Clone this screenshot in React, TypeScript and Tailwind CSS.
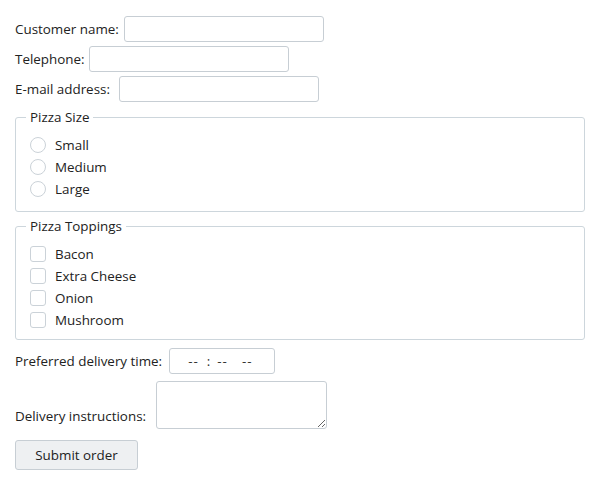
import React from 'react';

const inputCls = 'h-[26px] w-[200px] rounded-[3px] border border-[#c7ced4] bg-white';

const App: React.FC = () => {
  return (
    <div className="min-h-[480px] bg-white px-[15px] pt-[16px] text-[13.4px] text-[#222] font-['Open_Sans',sans-serif]">
      <form className="flex flex-col" onSubmit={(e) => e.preventDefault()}>
        {/* Customer details */}
        <div className="flex flex-col gap-[4px]">
          <label className="flex items-center gap-[5px]">
            Customer name:
            <input type="text" className={inputCls} />
          </label>
          <label className="flex items-center gap-[4px]">
            Telephone:
            <input type="tel" className={inputCls} />
          </label>
          <label className="flex items-center gap-[9px]">
            E-mail address:
            <input type="email" className={inputCls} />
          </label>
        </div>

        {/* Pizza size */}
        <fieldset className="mt-[5px] rounded-[3px] border border-[#cdd6dc] px-[14px] pb-[11px] pt-[7px]">
          <legend className="px-[4px] -ml-[4px]">Pizza Size</legend>
          <div className="flex flex-col">
            {['Small', 'Medium', 'Large'].map((s) => (
              <label key={s} className="flex h-[22px] items-center gap-[9px]">
                <span className="h-[16px] w-[16px] rounded-full border border-[#cbd2d8] bg-white" />
                {s}
              </label>
            ))}
          </div>
        </fieldset>

        {/* Toppings */}
        <fieldset className="mt-[4px] rounded-[3px] border border-[#cdd6dc] px-[14px] pb-[8px] pt-[7px]">
          <legend className="px-[4px] -ml-[4px]">Pizza Toppings</legend>
          <div className="flex flex-col">
            {['Bacon', 'Extra Cheese', 'Onion', 'Mushroom'].map((t) => (
              <label key={t} className="flex h-[22px] items-center gap-[9px]">
                <span className="h-[16px] w-[16px] rounded-[3px] border border-[#cbd2d8] bg-white" />
                {t}
              </label>
            ))}
          </div>
        </fieldset>

        {/* Delivery */}
        <label className="mt-[8px] flex items-center gap-[7px]">
          Preferred delivery time:
          <span className="flex h-[26px] w-[106px] items-center rounded-[3px] border border-[#c7ced4] bg-white pl-[18px] text-[#333] tracking-[1px]">
            <span>--</span>
            <span className="ml-[8px]">:</span>
            <span className="ml-[6px]">--</span>
            <span className="ml-[14px]">--</span>
          </span>
        </label>
        <label className="mt-[7px] flex items-end gap-[10px]">
          <span className="pb-[3px]">Delivery instructions:</span>
          <textarea className="h-[48px] w-[171px] rounded-[3px] border border-[#c7ced4] bg-white" />
        </label>

        <div className="mt-[11px]">
          <button
            type="submit"
            className="h-[30px] w-[123px] rounded-[3px] border border-[#c7ced4] bg-[#eef0f2] text-[#222]"
          >
            Submit order
          </button>
        </div>
      </form>
    </div>
  );
};

export default App;
